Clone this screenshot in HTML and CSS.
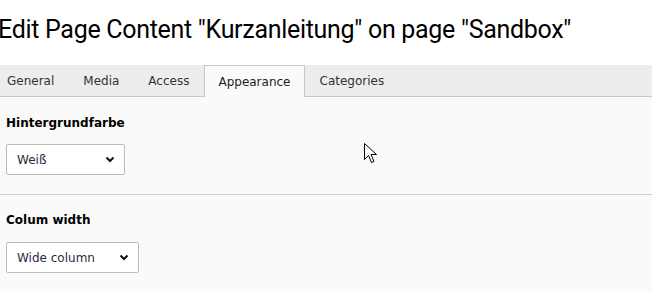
FILE: index.html
```html
<!DOCTYPE html>
<html>
<head>
<meta charset="utf-8">
<link rel="stylesheet" href="styles.css">
</head>
<body>
<div class="page">
  <header class="head">
    <h1 class="title">Edit Page Content "Kurzanleitung" on page "Sandbox"</h1>
  </header>
  <nav class="tabs">
    <div class="tab">General</div>
    <div class="tab">Media</div>
    <div class="tab">Access</div>
    <div class="tab active">Appearance</div>
    <div class="tab">Categories</div>
  </nav>
  <main class="panel">
    <section class="field">
      <div class="label">Hintergrundfarbe</div>
      <div class="select sel-bg"><span>Weiß</span>
        <svg class="chev" width="10" height="7" viewBox="0 0 10 7"><path d="M1.5 1.5 L5 5 L8.5 1.5" fill="none" stroke="#111" stroke-width="2"/></svg>
      </div>
    </section>
    <section class="field second">
      <div class="label">Colum width</div>
      <div class="select sel-col"><span>Wide column</span>
        <svg class="chev" width="10" height="7" viewBox="0 0 10 7"><path d="M1.5 1.5 L5 5 L8.5 1.5" fill="none" stroke="#111" stroke-width="2"/></svg>
      </div>
    </section>
  </main>
  <svg class="cursor" width="13" height="21" viewBox="0 0 13 21"><path d="M0.5 0.5 L0.5 16.5 L4.5 12.5 L7.5 19.5 L10 18.5 L7 11.5 L12.5 11.5 Z" fill="#fff" stroke="#000" stroke-width="1"/></svg>
</div>
</body>
</html>
```
FILE: styles.css
```css
html, body {
  margin: 0;
  padding: 0;
  background: #fafafa;
}
.page {
  position: relative;
  width: 652px;
  height: 291px;
  overflow: hidden;
  font-family: "DejaVu Sans", Verdana, sans-serif;
  font-size: 12px;
  color: #212121;
}
.head {
  background: #fff;
  height: 65px;
  display: flex;
  align-items: center;
}
.title {
  margin: -6px 0 0 -2px;
  font-family: Roboto, "Liberation Sans", sans-serif;
  font-weight: normal;
  font-size: 25px;
  letter-spacing: -0.3px;
  color: #000;
  white-space: nowrap;
}
.tabs {
  display: flex;
  background: #ededed;
  border-bottom: 1px solid #c8c8c8;
  height: 31px;
  margin-left: -7px;
}
.tab {
  height: 31px;
  box-sizing: border-box;
  padding: 0 13px;
  margin-right: 1px;
  display: flex;
  align-items: center;
  border: 1px solid transparent;
  border-bottom: none;
  color: #333;
  line-height: 1;
}
.tab.active {
  background: #fafafa;
  border-color: #c8c8c8;
  height: 32px;
  margin-bottom: -1px;
  color: #1a1a1a;
}
.panel {
  padding: 0 6px;
}
.field {
  padding-top: 19px;
  padding-bottom: 19px;
}
.second {
  border-top: 1px solid #cfcfcf;
  margin: 0 -6px;
  padding-left: 6px;
  padding-top: 18px;
}
.label {
  font-weight: bold;
  color: #000;
  font-size: 12px;
  line-height: 15px;
  margin-bottom: 13px;
}
.second .label {
  margin-bottom: 14px;
}
.select {
  box-sizing: border-box;
  height: 31px;
  background: #fff;
  border: 1px solid #bbb;
  border-radius: 2px;
  display: flex;
  align-items: center;
  justify-content: space-between;
  padding: 0 9px 0 10px;
  color: #1f2d3d;
  font-size: 12px;
}
.sel-bg { width: 119px; }
.sel-col { width: 133px; }
.chev { display: block; }
.cursor {
  position: absolute;
  left: 364px;
  top: 143px;
}
```
